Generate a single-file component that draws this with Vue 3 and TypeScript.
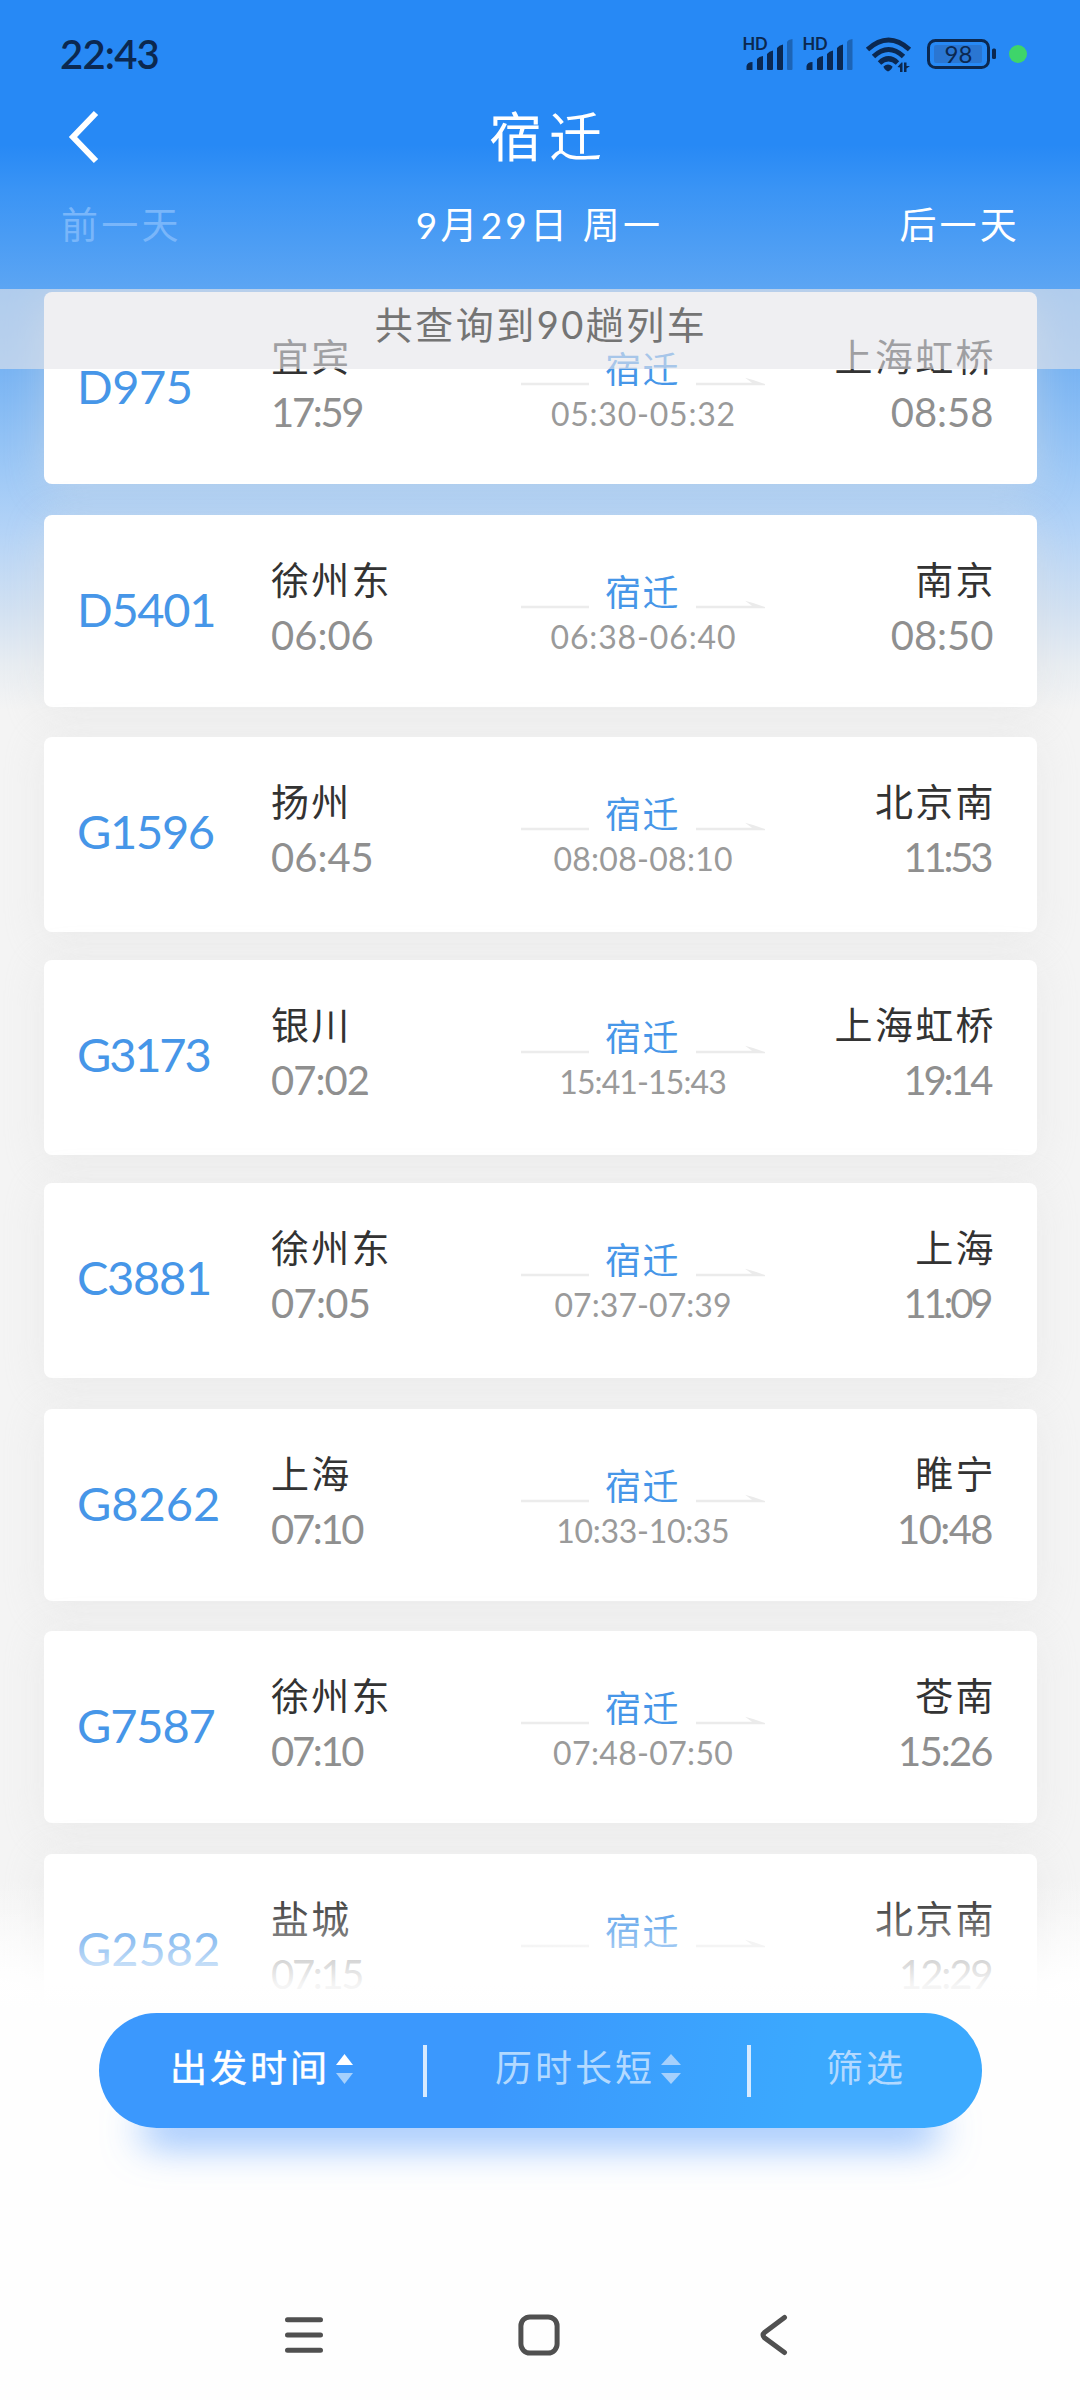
<script setup lang="ts">
interface Train {
  no: string
  from: string
  depart: string
  stop: string
  to: string
  arrive: string
  size?: string
}

const trains: Train[] = [
  { no: 'D975', from: '宜宾', depart: '17:59', stop: '05:30-05:32', to: '上海虹桥', arrive: '08:58' },
  { no: 'D5401', from: '徐州东', depart: '06:06', stop: '06:38-06:40', to: '南京', arrive: '08:50' },
  { no: 'G1596', from: '扬州', depart: '06:45', stop: '08:08-08:10', to: '北京南', arrive: '11:53', size: 'tall' },
  { no: 'G3173', from: '银川', depart: '07:02', stop: '15:41-15:43', to: '上海虹桥', arrive: '19:14', size: 'tall' },
  { no: 'C3881', from: '徐州东', depart: '07:05', stop: '07:37-07:39', to: '上海', arrive: '11:09', size: 'tall loose' },
  { no: 'G8262', from: '上海', depart: '07:10', stop: '10:33-10:35', to: '睢宁', arrive: '10:48' },
  { no: 'G7587', from: '徐州东', depart: '07:10', stop: '07:48-07:50', to: '苍南', arrive: '15:26' },
  { no: 'G2582', from: '盐城', depart: '07:15', stop: '', to: '北京南', arrive: '12:29' },
]

// Narrow figures (1, 7 and 2) tighten the tracking of the whole string;
// the margin cancels the tracking that trails the last figure.
function tracking(text: string, base = 0) {
  const count = (c: string) => text.split(c).length - 1
  const narrow = count('1') * 0.2 + count('7') * 0.09 + count('2') * 0.03
  const em = base - narrow / Math.max(text.length, 1)
  return { letterSpacing: `${em.toFixed(4)}em`, marginRight: `${(-em).toFixed(4)}em` }
}
</script>

<template>
  <div class="screen">
    <header class="header">
      <div class="status">
        <span class="clock">22:43</span>
        <div class="indicators">
          <div v-for="n in 2" :key="n" class="signal">
            <svg width="60" height="40" viewBox="-4 -6 60 40">
              <text x="-.5" y="13" class="hd">HD</text>
              <path d="M3.500 32.500v-3.500q1-4 6-4v7.500q0 .5-.8.5H4.300q-.8 0-.8-.5Z" />
              <path d="M14 22q2-2.500 6-3V32q0 1-1 1h-4q-1 0-1-1Z" />
              <path d="M24 17q2-3 6-3.500V32q0 1-1 1h-4q-1 0-1-1Z" />
              <path d="M34 11q2-3 6-3.500V32q0 1-1 1h-4q-1 0-1-1Z" />
              <path d="M44 5q1-2.500 5.500-3V32q0 1-1 1h-3.500q-1 0-1-1Z" opacity=".38" />
            </svg>
          </div>
          <svg class="wifi" width="48" height="36" viewBox="0 0 48 36">
            <g fill="none" stroke="#0b2850" stroke-width="5">
              <path d="M2.500 12.500Q23.500 -6.500 44.500 12.500" />
              <path d="M8.500 19.500Q23.500 5.500 38.500 19.500" />
              <path d="M14.500 26Q23.500 17.500 32.500 26" />
            </g>
            <path d="M18.500 29.500q4.500-4 9 0q-.5 3-4.500 5q-4-2-4.500-5Z" />
            <path d="M32.500 30l4-4.500h1V35h-2.500v-4.500ZM39 25.500h2.500v3.500h3.500l-3.500 2.500V35H39Z" />
          </svg>
          <svg class="battery" width="70" height="30" viewBox="0 0 70 30">
            <rect x="1.500" y="1.500" width="60" height="27" rx="7" fill="none" stroke="#0b2850" stroke-width="3" />
            <rect x="7" y="6" width="48" height="18" rx="2" fill="#2a76d2" />
            <rect x="65" y="9.500" width="4" height="10.500" rx="1.500" />
            <text x="31.500" y="23.500" class="pct">98</text>
          </svg>
          <span class="dot"></span>
        </div>
      </div>
      <div class="titlebar">
        <svg class="back" width="32" height="54" viewBox="0 0 32 54">
          <path d="M28 3L5 27L28 51" fill="none" stroke="#fff" stroke-width="6" />
        </svg>
        <h1>宿迁</h1>
      </div>
      <div class="days">
        <span class="off">前一天</span>
        <span class="today">9月29日 周一</span>
        <span class="next">后一天</span>
      </div>
    </header>

    <main class="body">
      <div class="banner">共查询到90趟列车</div>
      <div class="list">
        <article v-for="t in trains" :key="t.no" class="card" :class="t.size">
          <div class="no"><span :style="tracking(t.no, 0.012)">{{ t.no }}</span></div>
          <div class="end">
            <div class="station">{{ t.from }}</div>
            <div class="time"><span :style="tracking(t.depart)">{{ t.depart }}</span></div>
          </div>
          <div class="via">
            <div class="route">
              <svg width="68" height="10" viewBox="0 0 68 10"><path d="M0 7H68" stroke="#ececec" stroke-width="2.500" /></svg>
              <span>宿迁</span>
              <svg width="69" height="10" viewBox="0 0 69 10"><path d="M0 5.800H56L49 .8Q58 3 69 7V8.300H0Z" fill="#ebebeb" /></svg>
            </div>
            <div v-if="t.stop" class="stop"><span :style="tracking(t.stop, 0.027)">{{ t.stop }}</span></div>
          </div>
          <div class="end right">
            <div class="station">{{ t.to }}</div>
            <div class="time"><span :style="tracking(t.arrive)">{{ t.arrive }}</span></div>
          </div>
        </article>
      </div>
      <div class="fade"></div>
    </main>

    <footer class="footer">
      <div class="pill">
        <div class="opt active">
          <span>出发时间</span>
          <svg width="17" height="30" viewBox="0 0 17 30"><path d="M8.500 0L17 11H0Z" fill="#fff" /><path d="M0 19H17L8.500 30Z" fill="#a5d0fc" /></svg>
        </div>
        <i></i>
        <div class="opt sort">
          <span>历时长短</span>
          <svg width="20" height="30" viewBox="0 0 20 30"><path d="M10 0L20 11H0Z" fill="#a5d0fc" /><path d="M0 19H20L10 30Z" fill="#a5d0fc" /></svg>
        </div>
        <i></i>
        <div class="opt filter"><span>筛选</span></div>
      </div>
      <nav class="keys">
        <svg width="44" height="44" viewBox="0 0 44 44"><path d="M5.500 6.700H38.500M5.500 22H38.500M5.500 37.300H38.500" /></svg>
        <svg width="44" height="44" viewBox="0 0 44 44"><rect x="3.900" y="3.900" width="36.200" height="36.200" rx="9" /></svg>
        <svg width="44" height="44" viewBox="0 0 44 44"><path d="M32.500 4.500L12.500 19.500Q9.500 22 12.500 24.800L32.500 39.500" /></svg>
      </nav>
    </footer>
  </div>
</template>

<style>
body {
  margin: 0;
}
</style>

<style scoped>
.screen {
  width: 1080px;
  height: 2400px;
  overflow: hidden;
  display: flex;
  flex-direction: column;
  background: linear-gradient(#5ea6f2 289px, #79b4f3 370px, #9dc8f6 470px, #b3d3f7 530px, #d2e1f2 610px, #e8edf2 665px, #f4f4f4 710px, #f4f4f4 1880px, #fefefe 2010px);
  font-family: Lato, 'Noto Sans CJK SC', sans-serif;
}
.header {
  height: 289px;
  flex: none;
  color: #fff;
  background: linear-gradient(#2789f5 145px, #3a94f5 190px, #5ca5f3 289px);
}
.status {
  height: 96px;
  padding: 0 53px 0 60px;
  display: flex;
  align-items: flex-start;
  justify-content: space-between;
}
.clock {
  margin-top: 30px;
  font-size: 40px;
  line-height: 48px;
  font-weight: 600;
  letter-spacing: -0.800px;
  color: #0b2850;
}
.indicators {
  display: flex;
  padding-top: 37px;
  fill: #0b2850;
}
.indicators svg {
  display: block;
}
.signal {
  width: 60px;
}
.signal svg {
  margin: -6px 0 0 -4px;
}
.hd {
  font: 700 16.500px Lato, sans-serif;
  letter-spacing: -0.2px;
}
.wifi {
  margin-left: 2px;
}
.battery {
  margin: 2px 0 0 14px;
}
.pct {
  font: 400 24px Lato, sans-serif;
  text-anchor: middle;
}
.dot {
  width: 18px;
  height: 18px;
  margin: 8px 0 0 12px;
  border-radius: 50%;
  background: #3ed56a;
}
.titlebar {
  height: 80px;
  display: grid;
  grid-template-columns: 1fr auto 1fr;
  align-items: center;
}
.back {
  margin-left: 68px;
}
h1 {
  margin: 0;
  padding-left: 18px;
  font-size: 53px;
  line-height: 82px;
  font-weight: 400;
  letter-spacing: 7px;
}
.days {
  height: 98px;
  padding: 0 60px 0 61px;
  display: grid;
  grid-template-columns: 1fr auto 1fr;
  font-size: 37px;
  line-height: 98px;
  letter-spacing: 3.200px;
}
.today {
  margin-right: 2px;
}
.off {
  color: #79b6fa;
}
.next {
  text-align: right;
}
.body {
  position: relative;
  flex: none;
  height: 1721px;
  overflow: hidden;
}
.banner {
  position: absolute;
  z-index: 2;
  left: 0;
  top: 0;
  width: 100%;
  height: 80px;
  background: rgba(229, 229, 233, 0.61);
  color: #747474;
  font-size: 38px;
  line-height: 71px;
  letter-spacing: 2.500px;
  text-align: center;
  text-indent: 2px;
}
.list {
  padding: 3px 43.500px 0 44px;
  display: flex;
  flex-direction: column;
}
.card {
  flex: none;
  height: 192px;
  margin-bottom: 30.500px;
  box-sizing: border-box;
  padding: 0 43px 0 33px;
  display: flex;
  border-radius: 8px;
  background: #fff;
  box-shadow: 0 6px 40px rgba(222, 222, 222, 0.42);
}
.card.tall {
  height: 195px;
  margin-bottom: 28px;
}
.card.loose {
  margin-bottom: 30.500px;
}
.no {
  width: 194px;
  font-size: 47px;
  line-height: 189px;
  color: #4696e8;
}
.end {
  width: 250px;
  padding-top: 36px;
}
.station {
  font-size: 38px;
  line-height: 56px;
  letter-spacing: 2.300px;
  color: #333;
}
.time {
  font-size: 40px;
  line-height: 57px;
  color: #8f8f8f;
}
.right {
  flex: 1;
  text-align: right;
}
.right .station {
  margin-right: -2.300px;
}
.via {
  width: 244px;
  padding-top: 50px;
}
.route {
  display: flex;
  justify-content: space-between;
  color: #4696e8;
  font-size: 36px;
  line-height: 54px;
  letter-spacing: 1.600px;
}
.route svg {
  margin-top: 35px;
}
.stop {
  margin-top: -2px;
  font-size: 32px;
  line-height: 40px;
  text-align: center;
  color: #9a9a9a;
}
.fade {
  position: absolute;
  left: 0;
  bottom: 0;
  width: 100%;
  height: 130px;
  background: linear-gradient(rgba(255, 255, 255, 0), rgba(255, 255, 255, 0.15) 25%, rgba(255, 255, 255, 0.45) 50%, rgba(255, 255, 255, 0.9) 80%, #fefefe);
}
.footer {
  flex: 1;
  padding-top: 3px;
  background: #fefefe;
}
.pill {
  width: 883px;
  height: 115px;
  margin: 0 auto 0 99px;
  border-radius: 58px;
  display: flex;
  align-items: center;
  background: linear-gradient(100deg, #3b98fd 45%, #3ba9fe 80%);
  box-shadow: 0 58px 38px -42px rgba(59, 140, 253, 0.62);
}
.pill i {
  width: 4px;
  height: 52px;
  background: #d6eaff;
}
.opt {
  display: flex;
  align-items: center;
  box-sizing: border-box;
  color: #b3d9ff;
  font-size: 37px;
  line-height: 54px;
  letter-spacing: 3px;
}
.opt span {
  margin-top: -5px;
}
.opt svg {
  margin: -3px 0 0 6px;
}
.active {
  width: 324px;
  padding-left: 71px;
  color: #fff;
  -webkit-text-stroke: 0.5px #fff;
}
.sort {
  width: 320px;
  padding-left: 68px;
}
.filter {
  padding-left: 75px;
}
.keys {
  display: flex;
  justify-content: center;
  gap: 191px;
  margin-top: 185px;
  padding-right: 2px;
}
.keys svg {
  fill: none;
  stroke: #505050;
  stroke-width: 5;
  stroke-linecap: round;
}
</style>
